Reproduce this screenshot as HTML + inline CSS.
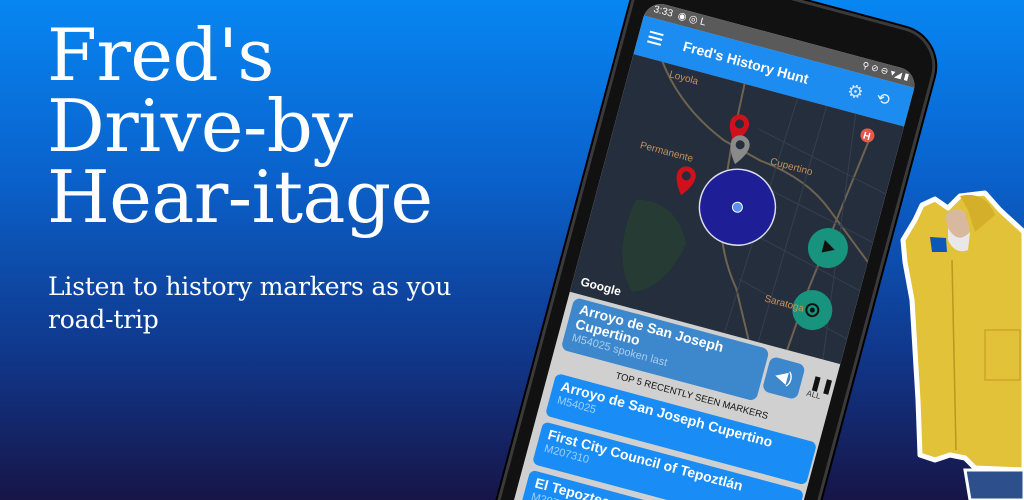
<!DOCTYPE html>
<html style="width:1024px;height:500px;overflow:hidden"><head><meta charset="utf-8">
<style>
*{margin:0;padding:0;box-sizing:border-box}
body{width:1024px;height:500px;overflow:hidden;position:relative;font-family:"Liberation Sans",sans-serif}
#wrap{position:absolute;left:0;top:0;width:1024px;height:500px;overflow:hidden;
background:linear-gradient(to bottom,#0786f2 0%,#0a62cc 35%,#10388c 70%,#171548 100%)}
.title{position:absolute;left:47px;color:#fff;font-family:"DejaVu Serif",serif;font-size:72px;line-height:71px;letter-spacing:-0.5px;white-space:nowrap}
.sub{position:absolute;left:48px;top:270px;color:#fff;font-family:"DejaVu Serif",serif;font-size:25px;line-height:33px;letter-spacing:-0.2px;white-space:nowrap}
#phone{position:absolute;left:648px;top:0;width:280px;height:540px;transform-origin:0 0;transform:rotate(15deg)}
.body{position:absolute;left:-16px;top:-40px;width:312px;height:600px;background:#111;border-radius:40px;border:3px solid #3a3a3a;box-shadow:0 0 0 2px #000}
.screen{position:absolute;left:0;top:0;width:280px;height:540px;background:#d0d0d0;overflow:hidden;border-radius:18px 18px 0 0}
.status{position:absolute;left:0;top:0;width:280px;height:16px;background:#5a5a5a;color:#fff;font-size:10px}
.appbar{position:absolute;left:0;top:16px;width:280px;height:40px;background:#1c8cf0;color:#fff}
.map{position:absolute;left:0;top:56px;width:280px;height:246px;background:#252e3c;overflow:hidden}
.lbl{position:absolute;color:#c8915a;font-size:10px}
.card{position:absolute;border-radius:7px;color:#fff}
.item{position:absolute;left:8px;width:270px;height:44px;background:#1a8cf5;border-radius:6px;color:#fff;padding:3px 8px;font-weight:bold;font-size:14px;line-height:16px}
.item small{display:block;font-weight:normal;color:#9dd0ff;font-size:11px;line-height:14px}
</style></head><body><div id="wrap">
<div class="title" style="top:20px">Fred's</div>
<div class="title" style="top:91px">Drive-by</div>
<div class="title" style="top:162px">Hear-itage</div>
<div class="sub">Listen to history markers as you<br>road-trip</div>

<div id="phone">
 <div class="body"></div>
 <div class="screen">
  <div class="status"><span style="position:absolute;left:8px;top:2px">3:33 &nbsp;◉ ◎ L</span><span style="position:absolute;right:8px;top:2px;font-size:9px">⚲ ⊘ ⊖ ▾◢ ▮</span></div>
  <div class="appbar">
   <div style="position:absolute;left:10px;top:13px;width:14px;height:2px;background:#fff;box-shadow:0 5px 0 #fff,0 10px 0 #fff"></div>
   <div style="position:absolute;left:46px;top:11px;font-size:14px;font-weight:bold">Fred's History Hunt</div>
   <div style="position:absolute;left:216px;top:9px;font-size:18px;color:#cfe6ff">⚙</div>
   <div style="position:absolute;left:246px;top:9px;font-size:16px;color:#e6f2ff">⟲</div>
  </div>
  <div class="map">
   <svg width="280" height="246" style="position:absolute;left:0;top:0">
    <g stroke="#6e6250" stroke-width="2" fill="none">
     <path d="M30 0 Q60 40 110 60 L150 70 Q200 75 230 100 L280 140"/>
     <path d="M115 0 L118 60 L125 130 Q135 170 160 200 L185 246"/>
     <path d="M250 20 L240 100 L230 180 L225 246"/>
    </g>
    <g stroke="#343f4f" stroke-width="1" fill="none">
     <path d="M140 40 L280 70 M140 90 L280 120 M150 140 L280 170 M160 190 L280 220 M170 0 L160 246 M200 0 L195 246 M230 0 L262 246"/>
    </g>
    <path d="M40 140 Q80 130 100 170 Q90 220 60 230 Q30 200 40 140Z" fill="#253b33"/>
    <circle cx="140" cy="121" r="38" fill="#1e1e96" stroke="#dde" stroke-width="1.5"/>
    <circle cx="140" cy="121" r="5" fill="#5a8ef0" stroke="#fff" stroke-width="1"/>
    <g><path d="M111 40 a9.5 9.5 0 1 1 19 0 Q130 48 120.5 60 Q111 48 111 40Z" fill="#d0101a"/><circle cx="120.5" cy="40" r="4.5" fill="#252e3c"/></g>
    <g><path d="M117 60 a9.5 9.5 0 1 1 19 0 Q136 68 126.5 80 Q117 68 117 60Z" fill="#8a8a8a"/><circle cx="126.5" cy="60" r="4.5" fill="#252e3c"/></g>
    <g><path d="M73 104 a9.5 9.5 0 1 1 19 0 Q92 112 82.5 124 Q73 112 73 104Z" fill="#d0101a"/><circle cx="82.5" cy="104" r="4.5" fill="#252e3c"/></g>
    <circle cx="247" cy="18" r="7" fill="#e8584a"/><text x="243" y="22" fill="#fff" font-size="10" font-weight="bold" font-family="Liberation Sans">H</text>
    <circle cx="238" cy="137" r="20" fill="#18937d"/><path d="M233 130 L245 137 L233 143Z" fill="#111"/>
    <circle cx="239" cy="201" r="20" fill="#18937d"/><circle cx="239" cy="201" r="6" fill="none" stroke="#111" stroke-width="2"/><circle cx="239" cy="201" r="2.5" fill="#111"/>
   </svg>
   <div class="lbl" style="left:40px;top:5px">Loyola</div>
   <div class="lbl" style="left:30px;top:81px">Permanente</div>
   <div class="lbl" style="left:160px;top:63px">Cupertino</div>
   <div class="lbl" style="left:190px;top:197px">Saratoga</div>
   <div style="position:absolute;left:8px;top:226px;color:#fff;font-size:12px;font-weight:bold">Google</div>
  </div>
  <div class="card" style="left:6px;top:306px;width:202px;height:54px;background:#3d87cc;padding:3px 8px;font-weight:bold;font-size:14px;line-height:15px">Arroyo de San Joseph<br>Cupertino<div style="font-weight:normal;color:#a6cdf0;font-size:11px">M54025 spoken last</div></div>
  <div class="card" style="left:211px;top:312px;width:36px;height:36px;background:#3d87cc;text-align:center;line-height:36px;font-size:16px">◀)</div>
  <div style="position:absolute;left:256px;top:318px;font-size:14px;font-weight:bold;color:#111">❚❚</div>
  <div style="position:absolute;left:255px;top:334px;font-size:8px;color:#333">ALL</div>
  <div style="position:absolute;left:66px;top:366px;font-size:9.5px;color:#111">TOP 5 RECENTLY SEEN MARKERS</div>
  <div class="item" style="top:384px">Arroyo de San Joseph Cupertino<small>M54025</small></div>
  <div class="item" style="top:434px">First City Council of Tepoztlán<small>M207310</small></div>
  <div class="item" style="top:484px">El Tepozteco National Park<small>M207311</small></div>
 </div>
</div>

<svg width="1024" height="500" style="position:absolute;left:0;top:0">
 <path d="M922 205 L935 199 L948 208 L960 196 L985 193 L1000 210 L1024 232 L1024 470 L975 468 L965 458 L950 455 L935 460 L920 455 L918 400 L912 300 L905 262 L903 240 L915 220Z" fill="#e2c238" stroke="#fff" stroke-width="5" stroke-linejoin="round"/>
 <path d="M930 237 L946 238 L947 252 L932 252Z" fill="#0c57b8"/>
 <path d="M945 215 Q955 205 965 212 L970 230 Q960 245 950 240Z" fill="#d9b8a0"/>
 <path d="M948 228 Q958 245 970 232 L968 250 Q955 255 948 240Z" fill="#e8e8e8"/>
 <path d="M960 196 Q985 190 995 215 L975 232 L968 210Z" fill="#d4b02a"/>
 <path d="M952 260 L956 450" stroke="#b8981e" stroke-width="1.5" fill="none"/>
 <path d="M985 330 L1020 330 L1020 380 L985 380Z" fill="none" stroke="#c9a828" stroke-width="1.5"/>
 <path d="M965 470 L1024 470 L1024 500 L970 500Z" fill="#2d4f8c" stroke="#fff" stroke-width="3"/>
</svg>
</div></body></html>
